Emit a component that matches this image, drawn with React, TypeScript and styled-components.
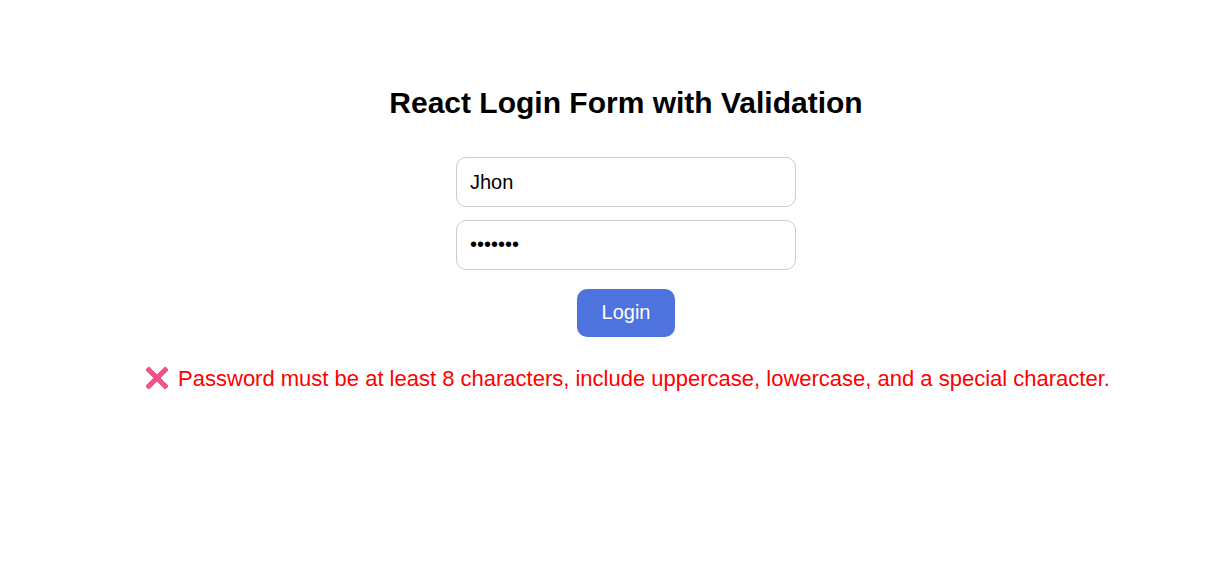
import React, { useState } from "react";
import styled, { createGlobalStyle } from "styled-components";

const GlobalStyle = createGlobalStyle`
  body {
    margin: 0;
    background: #fff;
    color: #000;
    font-family: "Liberation Sans", Arial, sans-serif;
  }
`;

const Page = styled.main`
  display: flex;
  flex-direction: column;
  align-items: center;
  padding: 85px 0 40px 20px;
`;

const Title = styled.h1`
  margin: 0;
  font-size: 30px;
  line-height: 36px;
  font-weight: 700;
`;

const Form = styled.form`
  display: flex;
  flex-direction: column;
  align-items: center;
  gap: 13px;
  width: 100%;
  margin-top: 36px;
`;

const Field = styled.input`
  box-sizing: border-box;
  width: 340px;
  max-width: 100%;
  height: 50px;
  padding: 0 13px;
  border: 1px solid #ccc;
  border-radius: 10px;
  background: #fff;
  color: #000;
  font-family: inherit;
  font-size: 20px;
  outline: none;

  &[type="password"] {
    padding-bottom: 2px;
  }
`;

const LoginButton = styled.button`
  height: 48px;
  margin-top: 6px;
  padding: 0 25px 2px;
  border: 0;
  border-radius: 10px;
  background: #4e73df;
  color: #fff;
  font-family: inherit;
  font-size: 20px;
  cursor: pointer;
`;

const ErrorMessage = styled.p`
  display: flex;
  align-items: center;
  gap: 6px;
  margin: 29px 0 0;
  color: #f00;
  font-size: 22px;
  line-height: 26px;
`;

const CrossIcon = () => (
  <svg width="30" height="26" viewBox="0 0 30 26" fill="none" aria-hidden="true">
    <g transform="rotate(45 15 12)">
      <g fill="#c94a76">
        <rect x="1" y="9.6" width="28" height="4.8" rx="1.2" />
        <rect x="12.6" y="-2" width="4.8" height="28" rx="1.2" />
      </g>
      <g fill="#ff4f84">
        <rect x="1.6" y="10.2" width="26.8" height="3.6" rx="0.8" />
        <rect x="13.2" y="-1.4" width="3.6" height="26.8" rx="0.8" />
      </g>
    </g>
  </svg>
);

export default function App() {
  const [name, setName] = useState("Jhon");
  const [password, setPassword] = useState("Jhon123");
  return (
    <>
      <GlobalStyle />
      <Page>
        <Title>React Login Form with Validation</Title>
        <Form onSubmit={(e) => e.preventDefault()}>
          <Field aria-label="Username" value={name} onChange={(e) => setName(e.target.value)} />
          <Field
            type="password"
            aria-label="Password"
            value={password}
            onChange={(e) => setPassword(e.target.value)}
          />
          <LoginButton type="submit">Login</LoginButton>
        </Form>
        <ErrorMessage role="alert">
          <CrossIcon />
          Password must be at least 8 characters, include uppercase, lowercase, and a special character.
        </ErrorMessage>
      </Page>
    </>
  );
}
